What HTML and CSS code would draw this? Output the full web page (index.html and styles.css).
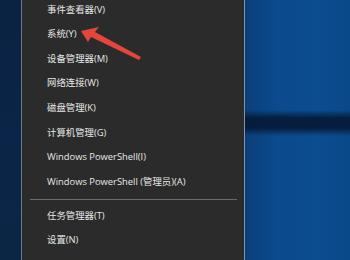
FILE: index.html
```html
<html>

<head>
    <link rel="stylesheet" href="styles.css">
</head>

<body>
    <div class="screen">
        <div class="edge"></div>

        <div class="menu">
            <div class="item">事件查看器(V)</div>
            <div class="item">系统(Y)</div>
            <div class="item">设备管理器(M)</div>
            <div class="item">网络连接(W)</div>
            <div class="item">磁盘管理(K)</div>
            <div class="item">计算机管理(G)</div>
            <div class="item">Windows PowerShell(I)</div>
            <div class="item">Windows PowerShell (管理员)(A)</div>
            <div class="sep"></div>
            <div class="item">任务管理器(T)</div>
            <div class="item">设置(N)</div>
        </div>

        <div class="desktop"></div>

        <!-- red pointer drawn over the menu -->
        <svg class="arrow" width="350" height="260" viewBox="0 0 350 260">
            <polygon points="81,31 99,27 95,32 141,57 139,60 91,37 88,42" fill="#e5463c" />
        </svg>
    </div>
</body>

</html>
```

FILE: styles.css
```css
body {
    margin: 0;
    background: #0a3a70;
}

.screen {
    position: relative;
    display: flex;
    width: 350px;
    height: 260px;
    overflow: hidden;
}

.edge {
    width: 21px;
    background: linear-gradient(180deg, #0b2242 0%, #0a2547 50%, #0b2645 100%);
}

.menu {
    width: 222px;
    margin-top: -2.3px;
    background: #2b2b2b;
    border-left: 1px solid #6c7884;
    border-right: 1px solid #8593a0;
    font-family: "Open Sans", "Noto Sans CJK SC", sans-serif;
    font-size: 9.4px;
    color: #e8e8e8;
}

.item {
    height: 24.6px;
    line-height: 24.6px;
    padding-left: 25px;
    white-space: nowrap;
}

.sep {
    height: 1px;
    margin: 4.5px 7px 3.7px 8px;
    background: #6a6a6a;
}

.desktop {
    flex: 1;
    background:
        linear-gradient(180deg, rgba(5, 25, 55, 0) 0px, rgba(5, 25, 55, 0) 110px, rgba(5, 27, 58, 0.95) 118px, rgba(5, 27, 58, 0.95) 128px, rgba(5, 25, 55, 0) 136px),
        linear-gradient(90deg, #0a3f7a 0%, #0b4a8c 30%, #0b4d90 70%, #0a4888 100%);
}

.arrow {
    position: absolute;
    left: 0;
    top: 0;
}
```
